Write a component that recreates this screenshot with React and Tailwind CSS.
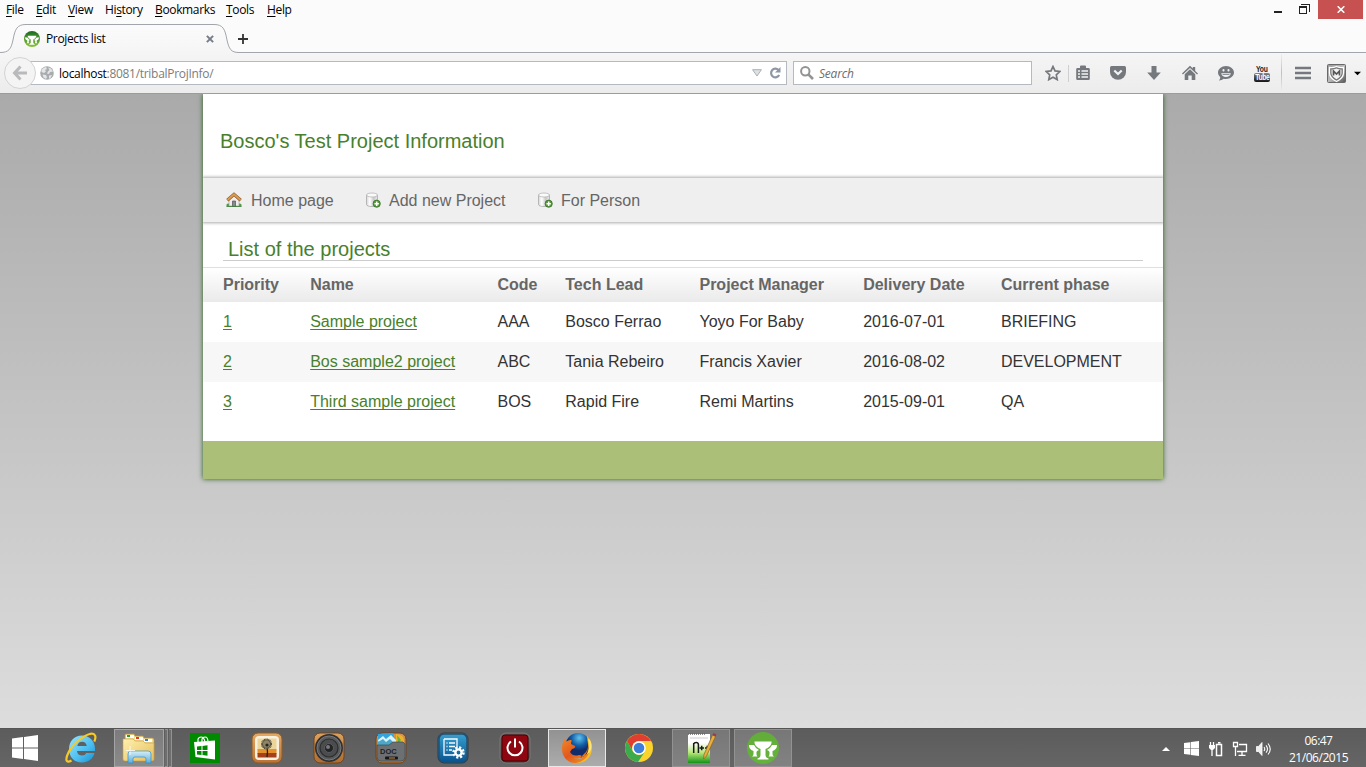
import React from "react";

const menus = [
  ["", "F", "ile", "w-[30px]", ""],
  ["", "E", "dit", "w-8", ""],
  ["", "V", "iew", "w-[37px]", ""],
  ["Hi", "s", "tory", "w-[50px]", ""],
  ["", "B", "ookmarks", "w-[71px]", ""],
  ["", "T", "ools", "w-[41px]", ""],
  ["", "H", "elp", "w-10", ""],
];

function Tree({ id, size, from, to, className }) {
  return (
    <svg className={className} width={size} height={size} viewBox="0 0 32 32">
      <defs>
        <linearGradient id={id} x1="0" y1="0" x2="0" y2="1">
          <stop offset="0" stopColor={from} />
          <stop offset="1" stopColor={to} />
        </linearGradient>
      </defs>
      <circle cx="16" cy="16" r="16" fill={`url(#${id})`} />
      <path fill="#fff" d="M7.500 9.500h17v1.500q-1 4-6 6v6q0 2.500 3 3.500v1h-11v-1q3-1 3-3.500v-6q-5-2-6-6zM2 13h5q1.500 3.500 5 5-2.500 1-2.500 2v2q0 1.500 1 2.500H5q1.500-1 1.500-2.500v-3Q2.500 17.500 2 14zM30 13h-5q-1.500 3.500-5 5 2.500 1 2.500 2v2q0 1.500-1 2.500H27q-1.500-1-1.500-2.500v-3q4-1.500 4.500-5z" />
    </svg>
  );
}

function TitleArea() {
  return (
    <header className="relative h-[53px] shrink-0 border-b border-[#a2a5ac] bg-[#fbfbfb]">
      <div className="flex h-[20px] justify-between">
        <nav className="flex pl-[6px] text-[12px] leading-[20px] tracking-[-0.35px] text-black">
          {menus.map(([a, u, b, w]) => (
            <span key={u + b} className={`${w} whitespace-nowrap`}>
              {a}
              <span className="underline underline-offset-2 decoration-1">{u}</span>
              {b}
            </span>
          ))}
        </nav>
        <div className="flex h-[19px]">
          <svg width="72" height="19" viewBox="0 0 72 19" fill="none" shapeRendering="crispEdges">
            <path d="M28 11h8v2h-8z" fill="#222" />
            <path d="M53.500 6.500h7v7h-7zM53.500 7.500h7M55 4.500h8.500v7.500" stroke="#222" />
          </svg>
          <div className="mr-[3px] flex w-[45px] items-center justify-center bg-[#c75050]">
            <svg width="8" height="7" viewBox="0 0 8 7">
              <path d="M.7.3l6.600 6.400M7.300.3L.7 6.700" stroke="#fff" strokeWidth="1.600" />
            </svg>
          </div>
        </div>
      </div>
      <div className="relative flex h-[33px] items-start">
        <svg className="absolute left-0 top-[4px]" width="240" height="30" viewBox="0 0 240 30">
          <defs>
            <linearGradient id="tab" x1="0" y1="0" x2="0" y2="1">
              <stop offset="0" stopColor="#fbfbfb" />
              <stop offset="1" stopColor="#f5f5f6" />
            </linearGradient>
          </defs>
          <path d="M0 28.500C9 28.500 11 25 13 16C15 5 17 .5 26 .5H214C223 .5 225 5 227 16C229 25 231 28.500 239 28.500V30H0z" fill="url(#tab)" />
          <path d="M0 28.500C9 28.500 11 25 13 16C15 5 17 .5 26 .5H214C223 .5 225 5 227 16C229 25 231 28.500 239 28.500" fill="none" stroke="#a2a5ac" />
        </svg>
        <div className="relative flex h-[38px] w-[229px] items-center pl-6 pr-[15px]">
          <Tree id="fav" size={16} from="#186a22" to="#8bc53a" />
          <span className="ml-[6px] grow text-[12px] tracking-[-0.35px] text-black">Projects list</span>
          <svg width="8" height="8" viewBox="0 0 9 9">
            <path d="M1 1l7 7M8 1l-7 7" stroke="#777e87" strokeWidth="2.300" />
          </svg>
        </div>
        <svg className="mt-[14px] ml-[9px]" width="10" height="10" viewBox="0 0 10 10">
          <path d="M5 0v10M0 5h10" stroke="#333" strokeWidth="1.800" />
        </svg>
      </div>
    </header>
  );
}

const icon = "block h-4 w-4";

function Toolbar() {
  return (
    <div className="flex h-[41px] shrink-0 items-center border-b border-[#999ca0] bg-linear-to-b from-[#f5f5f6] to-[#ececed]">
      <div className="relative z-10 ml-1 flex h-8 w-8 shrink-0 items-center justify-center rounded-full border border-[#d3d3d4] bg-[#f4f4f4]">
        <svg width="16" height="16" viewBox="0 0 16 16" fill="none" stroke="#b9babc" strokeWidth="3">
          <path d="M8.500 1.500L2.500 8l6 6.500M3 8h12" />
        </svg>
      </div>
      <div className="-ml-[6px] flex h-[24px] w-[757px] shrink-0 items-center border border-[#b5bac0] bg-white pl-[9px] pr-[5px]">
        <svg width="14" height="14" viewBox="0 0 14 14">
          <circle cx="7" cy="7" r="6.800" fill="#a9abae" />
          <path d="M1.500 4Q3 1.500 6 1L7 3 5 4l1 1.500L4 7 1.500 6zM8 1.500l3 1 2 3-3 .5-1 2-2-.5L8 5.500 9.500 4zM2.500 8.500L6 9l1 2-1 2-2.500-1.500zM9 9.500l3-.5-1.500 3-1.500 1z" fill="#e4e5e6" />
        </svg>
        <span className="ml-[5px] grow pt-[2px] text-[12px] tracking-[-0.3px] text-[#7c7c7c]">
          <span className="text-black">localhost</span>:8081/tribalProjInfo/
        </span>
        <svg className="mr-[7px]" width="10" height="8" viewBox="0 0 10 8">
          <path d="M.6.700h8.800L5 7z" fill="#dfe2e4" stroke="#a9afb4" />
        </svg>
        <svg width="12" height="12" viewBox="0 0 12 12">
          <path d="M9.500 3A4.300 4.300 0 1 0 10.200 8" fill="none" stroke="#8d97a4" strokeWidth="2.200" />
          <path d="M11.500 0v5.500H6z" fill="#8d97a4" />
        </svg>
      </div>
      <div className="ml-[6px] flex h-[24px] w-[239px] shrink-0 items-center border border-[#b5bac0] bg-white pl-[6px]">
        <svg width="14" height="14" viewBox="0 0 14 14" fill="none" stroke="#919395">
          <circle cx="5.300" cy="5.300" r="4.200" strokeWidth="2" />
          <path d="M8.300 8.300L13 13" strokeWidth="2.600" />
        </svg>
        <span className="ml-[5px] pt-[2px] text-[12px] tracking-[-0.2px] text-[#6d6d6d] italic">Search</span>
      </div>
      <div className="flex grow items-center pl-[13px] text-[#75797d]">
        <svg className={icon} viewBox="0 0 16 16" fill="none" stroke="currentColor" strokeWidth="1.700">
          <path d="M8 1.500l2 4.400 4.800.6-3.500 3.300.9 4.800L8 12.200l-4.200 2.400.9-4.800L1.200 6.500 6 5.900z" />
        </svg>
        <span className="ml-[7px] h-[17px] w-px bg-[#cfcfd1]" />
        <svg className={`${icon} ml-[6px]`} viewBox="0 0 16 16">
          <path fill="currentColor" d="M5 3V1.500Q5 .5 6 .5h4q1 0 1 1V3h2.500q1.300 0 1.300 1.300v9.400q0 1.300-1.300 1.300h-11Q1.200 15 1.200 13.700V4.300Q1.200 3 2.500 3z" />
          <path d="M3 6h2M3 9h2M3 12h2M6.500 6H13M6.500 9H13M6.500 12H13" stroke="#f3f3f4" strokeWidth="1.500" />
        </svg>
        <svg className={`${icon} ml-[19px]`} viewBox="0 0 16 16">
          <path fill="currentColor" d="M1.500 1h13Q16 1 16 2.500V7A8 7.800 0 0 1 0 7V2.500Q0 1 1.500 1z" />
          <path d="M4.300 5.500L8 9l3.700-3.500" fill="none" stroke="#f3f3f4" strokeWidth="2.200" />
        </svg>
        <svg className={`${icon} ml-5`} viewBox="0 0 16 16" fill="currentColor">
          <path d="M5.500 1h5v6.500h4.300L8 15 1.200 7.500h4.300z" />
        </svg>
        <svg className={`${icon} ml-5`} viewBox="0 0 16 16" fill="currentColor">
          <path d="M8 .8l2.800 2.700V2h2.400v3.900L16 8.500l-.9 1L8 2.900.9 9.500l-.9-1zM8 4.200l5.300 5V15H9.700v-4.500H6.300V15H2.700V9.200z" />
        </svg>
        <svg className={`${icon} ml-5`} viewBox="0 0 16 16">
          <path fill="currentColor" d="M8 1c4.500 0 8 3 8 6.500S12.500 14 8 14c-.8 0-1.500-.1-2.200-.3Q4 15.500.8 15.500q1.700-1.500 1.400-3.500C.8 10.900 0 9.300 0 7.500 0 4 3.500 1 8 1z" />
          <path d="M3.200 8.200h9.600Q12 12 8 12T3.200 8.200zM5.500 4a1 1.200 0 0 0 0 2.500 1 1.200 0 0 0 0-2.500zM10.500 4a1 1.200 0 0 0 0 2.500 1 1.200 0 0 0 0-2.500z" fill="#f3f3f4" />
          <path d="M4.500 9.500h7" stroke="currentColor" strokeWidth=".8" />
        </svg>
        <div className="ml-5 flex w-4 flex-col items-center font-['Liberation_Sans',sans-serif] text-[9px] leading-[8px] font-bold text-[#222]">
          <span className="scale-x-75 tracking-tight">You</span>
          <span className="flex h-[9px] w-4 items-center justify-center rounded-[2px] bg-linear-to-b from-[#888] to-[#161616] text-white">
            <span className="scale-x-75 tracking-[-0.5px]">Tube</span>
          </span>
        </div>
        <span className="ml-[11px] h-[38px] w-px bg-linear-to-b from-[#eee] via-[#bfc0c2] to-[#eee]" />
        <svg className={`${icon} ml-[13px]`} viewBox="0 0 16 16" stroke="currentColor" strokeWidth="2.600">
          <path d="M0 3h16M0 8h16M0 13h16" />
        </svg>
        <svg className="ml-4 shrink-0" width="19" height="19" viewBox="0 0 19 19">
          <defs>
            <linearGradient id="mc" x1="0" y1="0" x2="1" y2="1">
              <stop offset="0" stopColor="#999" />
              <stop offset=".5" stopColor="#bbb" />
              <stop offset="1" stopColor="#555" />
            </linearGradient>
          </defs>
          <rect x=".5" y=".5" width="18" height="18" rx="1" fill="url(#mc)" stroke="#696969" />
          <path d="M2.500 3.500Q6 4 9.500 2.500 13 4 16.500 3.500V9q0 5-7 8.500Q2.500 14 2.500 9z" fill="#777" stroke="#fff" strokeWidth="1.300" />
          <path d="M4.500 5.500q3 0 5-1 2 1 5 1V9q0 3.500-5 6.200Q4.500 12.500 4.500 9z" fill="#f2f2f2" />
          <path d="M6.500 11.500V7l3 3 3-3v4.500" fill="none" stroke="#555" strokeWidth="1.700" />
        </svg>
        <svg className="ml-2 shrink-0" width="7" height="5" viewBox="0 0 8 5">
          <path d="M0 .5h8L4 4.500z" fill="#000" />
        </svg>
      </div>
    </div>
  );
}

function HomeIcon() {
  return (
    <svg width="16" height="16" viewBox="0 0 16 16">
      <path d="M.5 12.500Q2 10.500 4 12.500h8q1.500-2 3.500 0v2H.5z" fill="#4f9a4b" />
      <path d="M3 7.500L8 3l5 4.500v6.500H3z" fill="#eee" stroke="#999" strokeWidth=".6" />
      <path d="M6.500 9h3v5.500h-3z" fill="#888" stroke="#555" strokeWidth=".7" />
      <path d="M1.300 8.200L8 2.300l6.700 5.900" fill="none" stroke="#8d5a26" strokeWidth="3.200" />
      <path d="M1.500 8L8 2.300 14.500 8" fill="none" stroke="#dc9b50" strokeWidth="2" />
      <path d="M.5 14.500h15" stroke="#3d7b39" strokeWidth=".8" />
    </svg>
  );
}

function DatabaseAdd({ id }) {
  return (
    <svg width="16" height="16" viewBox="0 0 16 16">
      <defs>
        <linearGradient id={id}>
          <stop offset="0" stopColor="#d5d5d5" />
          <stop offset=".3" stopColor="#fff" />
          <stop offset=".65" stopColor="#c8c8c8" />
          <stop offset="1" stopColor="#e8e8e8" />
        </linearGradient>
      </defs>
      <path d="M1.500 3v9.500c0 2.700 11 2.700 11 0V3z" fill={`url(#${id})`} stroke="#aaa" strokeWidth=".8" />
      <ellipse cx="7" cy="3" rx="5.500" ry="2" fill="#fafafa" stroke="#b5b5b5" strokeWidth=".8" />
      <circle cx="11.700" cy="11.700" r="3.600" fill="#5a9b40" stroke="#347023" strokeWidth=".8" />
      <path d="M11.700 9.500v4.400M9.500 11.700h4.400" stroke="#fff" strokeWidth="1.500" />
    </svg>
  );
}

const columns = ["Priority", "Name", "Code", "Tech Lead", "Project Manager", "Delivery Date", "Current phase"];
const projects = [
  ["1", "Sample project", "AAA", "Bosco Ferrao", "Yoyo For Baby", "2016-07-01", "BRIEFING"],
  ["2", "Bos sample2 project", "ABC", "Tania Rebeiro", "Francis Xavier", "2016-08-02", "DEVELOPMENT"],
  ["3", "Third sample project", "BOS", "Rapid Fire", "Remi Martins", "2015-09-01", "QA"],
];
const grid = "grid grid-cols-[87.200px_187.300px_67.800px_134.200px_163.700px_137.800px_1fr] pl-5";

function Page() {
  return (
    <main className="h-[634px] shrink-0 overflow-hidden bg-linear-to-b from-[#aaaaaa] to-[#dddddd] font-['Liberation_Sans',Arial,sans-serif] text-base text-[#333]">
      <div className="mx-auto flex h-[385px] w-[960px] flex-col bg-white shadow-[0_0_5px_#255b17]">
        <div className="flex h-[84px] shrink-0 items-center pt-[10px] pl-[17px] text-[20px] text-[#48802c]">
          Bosco&#39;s Test Project Information
        </div>
        <nav className="flex h-11 shrink-0 items-center bg-[#efefef] pl-[23px] text-[#666] shadow-[0_0_3px_1px_#aaaaaa] [clip-path:inset(-4px_0)]">
          <a className="flex w-[139px] items-center gap-[9px]"><HomeIcon /><span className="pt-[2px]">Home page</span></a>
          <a className="flex w-[172px] items-center gap-2"><DatabaseAdd id="db1" /><span className="pt-[2px]">Add new Project</span></a>
          <a className="flex items-center gap-2"><DatabaseAdd id="db2" /><span className="pt-[2px]">For Person</span></a>
        </nav>
        <h1 className="mx-5 mt-[14px] mb-[6px] h-[25px] shrink-0 border-b border-[#ccc] pl-[5px] text-[20px] leading-[27px] text-[#48802c]">
          List of the projects
        </h1>
        <div className={`${grid} h-[35px] shrink-0 items-center border-t border-[#dfdfdf] bg-linear-to-b from-white to-[#eaeaea] font-bold text-[#666]`}>
          {columns.map((c) => <span key={c}>{c}</span>)}
        </div>
        {projects.map((p, i) => (
          <div key={p[0]} className={`${grid} h-10 shrink-0 items-center ${i % 2 ? "bg-[#f7f7f7]" : "bg-white"}`}>
            {p.map((v, j) => (
              <span key={j} className={j < 2 ? "text-[#48802c] underline decoration-1 underline-offset-2 [text-decoration-skip-ink:none]" : ""}>{v}</span>
            ))}
          </div>
        ))}
        <footer className="mt-auto h-[38px] bg-[#abbf78]" />
      </div>
    </main>
  );
}

function WindowsLogo({ size }) {
  return (
    <svg width={size} height={size} viewBox="0 0 26 26" fill="#fff">
      <path d="M0 3.600L11 2v10.500H0zM12 1.900L26 0v12.500H12zM0 13.500h11V24L0 22.400zM12 13.500h14V26l-14-1.900z" />
    </svg>
  );
}

function IeIcon() {
  return (
    <svg width="32" height="32" viewBox="0 0 32 32">
      <defs>
        <linearGradient id="ie" x1="0" y1="0" x2="1" y2="1">
          <stop offset="0" stopColor="#9be5ff" />
          <stop offset=".6" stopColor="#48bdf0" />
          <stop offset="1" stopColor="#188fd0" />
        </linearGradient>
      </defs>
      <path fill="url(#ie)" fillRule="evenodd" d="M17 3.500c7.500 0 13 5.500 13 13.500v2H12c.3 3 2.200 4.500 5 4.500 2 0 3.500-.8 4.300-2.500H29.500c-1.500 6-6.500 9.500-12.500 9.500C9.300 30.500 4 25 4 17.200 4 9 9.500 3.500 17 3.500zM12.300 14h9.500c-.4-2.700-2.200-4.200-4.700-4.200-2.600 0-4.300 1.500-4.800 4.200z" />
      <path d="M6.500 28.500C2 31 .2 29 2.200 23.500 5.500 14 17 4 25.500 1.800c5-.8 6 3 3.800 7.800" fill="none" stroke="#f7c927" strokeWidth="2.200" />
    </svg>
  );
}

function FolderIcon() {
  return (
    <svg width="34" height="32" viewBox="0 0 34 32">
      <defs>
        <linearGradient id="fold" x1="0" y1="0" x2="1" y2="1">
          <stop offset="0" stopColor="#fff1ae" />
          <stop offset="1" stopColor="#e5be5c" />
        </linearGradient>
        <linearGradient id="glass" x1="0" y1="0" x2="0" y2="1">
          <stop offset="0" stopColor="#d4effa" />
          <stop offset="1" stopColor="#60add8" />
        </linearGradient>
      </defs>
      <path d="M3 3q0-1 1-1h8l1 2h8l1 2h8q2 0 2 2v20H3z" fill="#f1db91" stroke="#b99443" strokeWidth=".7" />
      <path d="M4 3h8v3H4zM13 5h8v3h-8zM22 7h8v3h-8z" fill="#fff" />
      <path d="M5 3h3v2H5z" fill="#1aa62c" />
      <path d="M14 5h3v2h-3z" fill="#e03b28" />
      <path d="M23 7h3v2h-3z" fill="#2885d0" />
      <path d="M1 7h10l2 2h8l2 2h9v16q0 2-2 2H3q-2 0-2-2z" fill="url(#fold)" stroke="#c59c47" strokeWidth=".6" />
      <path d="M6 31V22q0-3 3-3h17q3 0 3 3v9h-5v-4q0-2-2-2h-9q-2 0-2 2v4z" fill="url(#glass)" stroke="#398dbb" strokeWidth=".7" />
      <path d="M8 14v9M4 18.500h9" stroke="#fff" opacity=".8" />
    </svg>
  );
}

function StoreIcon() {
  return (
    <svg width="30" height="30" viewBox="0 0 30 30">
      <path d="M0 0h30v30H0z" fill="#008a00" />
      <path d="M8 9V6q1-2 3-2 3 0 4 5M12 9V6q1-2 3-2 3 0 3 5" fill="none" stroke="#fff" strokeWidth="1.200" />
      <path d="M4 9l21-1.500v19L5.500 24z" fill="#fff" />
      <path d="M7 13.500l4.500-.5v4H7zM12.500 12.900l5-.6V17h-5zM7 18h4.500v4L7 21.500zM12.500 18h5v4.700l-5-.6z" fill="#008a00" />
    </svg>
  );
}

function AppTile({ id, from, to, edge, children }) {
  return (
    <svg width="32" height="32" viewBox="0 0 32 32">
      <defs>
        <linearGradient id={id} x1="0" y1="0" x2="0" y2="1">
          <stop offset="0" stopColor={from} />
          <stop offset="1" stopColor={to} />
        </linearGradient>
      </defs>
      <rect x="1" y="1" width="30" height="30" rx="6" fill={`url(#${id})`} stroke={edge} />
      {children}
    </svg>
  );
}

function PhotoIcon() {
  return (
    <AppTile id="photo" from="#e5a964" to="#b97334" edge="#8a5a2c">
      <rect x="4" y="4" width="24" height="24" rx="4" fill="#f7f0df" />
      <path d="M6.500 6.500h19v13h-19z" fill="#ecd59a" />
      <path d="M6.500 17h19v5h-19z" fill="#e5922e" />
      <path d="M6.500 21h19v4.500h-19z" fill="#a3401b" />
      <path d="M16 15q1 5 0 10" stroke="#222" strokeWidth="1.300" fill="none" />
      <circle cx="15.500" cy="12" r="4.500" fill="#8d8468" stroke="#4b4737" strokeWidth="2" strokeDasharray=".9 .5" />
      <circle cx="16" cy="13" r="1.600" fill="#29251f" />
    </AppTile>
  );
}

function SpeakerTile() {
  return (
    <AppTile id="spk" from="#dda15e" to="#ae6c31" edge="#70451f">
      <circle cx="16" cy="16" r="14" fill="#303133" />
      <circle cx="16" cy="16" r="12" fill="#595a5c" stroke="#77787a" />
      <circle cx="16" cy="16" r="9" fill="#4b4c4e" stroke="#2c2d2e" strokeWidth="1.200" />
      <circle cx="16" cy="16" r="4.500" fill="#232426" stroke="#5a5b5d" />
      <circle cx="15" cy="15" r="2" fill="#77797c" />
    </AppTile>
  );
}

function DocTile() {
  return (
    <AppTile id="doc" from="#d09453" to="#bd7735" edge="#70451f">
      <path d="M3 2l15-1 4 15H3z" fill="#35a5dc" />
      <path d="M3 8l5-4 3 3 5-4 5 5v4H4z" fill="#d9f4ff" />
      <path d="M3 10l5-3 3 3 4-3 4 4v2H3z" fill="#4ca8c9" />
      <path d="M21 2q8 1 8 6v8h-8z" fill="#efb22b" />
      <path d="M22 3l4 5-3 4z" fill="#62b541" />
      <path d="M2 13h12l4-3h10l2 2v13q0 4-4 4H6q-4 0-4-4z" fill="#6c7073" stroke="#44484b" strokeWidth=".7" />
      <text x="5" y="22" fontFamily="Liberation Sans" fontWeight="bold" fontSize="7.500" fill="#202325">DOC</text>
      <rect x="10" y="24.500" width="13" height="3" rx="1" fill="#161616" />
      <path d="M14 26h6" stroke="#d88f45" />
    </AppTile>
  );
}

function SettingsTile() {
  return (
    <AppTile id="set" from="#39a2d1" to="#07518e" edge="#303a45">
      <rect x="2" y="2" width="28" height="28" rx="5" fill="none" stroke="#24506f" strokeWidth="1.500" />
      <path d="M7 7h13v9M7 7v16h9M9.500 11h1M12 11h6M9.500 14.500h1M12 14.500h6M9.500 18h1M12 18h3" fill="none" stroke="#f4fbff" strokeWidth="1.300" />
      <circle cx="21.500" cy="20.500" r="4.900" fill="none" stroke="#fff" strokeWidth="2.600" strokeDasharray="2.050 1.800" />
      <circle cx="21.500" cy="20.500" r="3.100" fill="none" stroke="#fff" strokeWidth="2.400" />
    </AppTile>
  );
}

function PowerTile() {
  return (
    <AppTile id="pow" from="#666061" to="#3e3839" edge="#7d7778">
      <rect x="3" y="3" width="26" height="26" rx="3" fill="#8e0710" stroke="#4b0003" />
      <path d="M12 9.500a7.500 7.500 0 1 0 8 0M16 6.500v9" fill="none" stroke="#fff" strokeWidth="2" />
    </AppTile>
  );
}

function FirefoxIcon() {
  return (
    <svg width="32" height="32" viewBox="0 0 32 32">
      <defs>
        <radialGradient id="ffb" cx=".55" cy=".2">
          <stop offset="0" stopColor="#64c3ec" />
          <stop offset=".6" stopColor="#1260a8" />
          <stop offset="1" stopColor="#122c69" />
        </radialGradient>
        <linearGradient id="ffo" x1="0" y1="0" x2=".8" y2="1">
          <stop offset="0" stopColor="#f08a26" />
          <stop offset=".55" stopColor="#e3571c" />
          <stop offset="1" stopColor="#ee8e1d" />
        </linearGradient>
      </defs>
      <circle cx="17" cy="13.500" r="12.500" fill="url(#ffb)" />
      <path d="M26 4q5 5 5 12c0 9-7 15-15 15l5-4q8-5 6-15z" fill="#f7bd27" />
      <path d="M27 11q1 7-4 11l-3 3q4 0 8-5-2 9-13 11C7 31.500 1 25 1 17Q1 10 4 6l1.500 3.500q2-2 5-1.500L10 12l4 2q1 2-3 3l-2 3q3 5 9 3 3 0 3 2-4 3-9 1 8 4 13-4 3-5 2-11z" fill="url(#ffo)" />
      <path d="M27 7q3 9-1 15l3-2q3-6 0-12z" fill="#fce57a" />
    </svg>
  );
}

function ChromeIcon() {
  return (
    <svg width="30" height="30" viewBox="0 0 30 30">
      <circle cx="15" cy="15" r="14" fill="#fbd32d" />
      <path d="M2.900 8A14 14 0 0 1 27.100 8H15a7 7 0 0 0-6 10.500z" fill="#df3e31" />
      <path d="M2.900 8A14 14 0 0 0 14 29l7-10.500a7 7 0 0 1-12 0z" fill="#3bab4b" />
      <circle cx="15" cy="15" r="6.800" fill="#fff" />
      <circle cx="15" cy="15" r="5.300" fill="#3d7edb" />
    </svg>
  );
}

function NotepadIcon() {
  return (
    <svg width="32" height="32" viewBox="0 0 32 32">
      <defs>
        <linearGradient id="npp" x1="0" y1="0" x2="0" y2="1">
          <stop offset=".3" stopColor="#fff" />
          <stop offset=".65" stopColor="#b3e676" />
          <stop offset="1" stopColor="#159317" />
        </linearGradient>
      </defs>
      <path d="M3 2h22v29H3z" fill="url(#npp)" />
      <path d="M3 2h17" stroke="#666" strokeWidth="1.500" strokeDasharray="1 1" />
      <path d="M5 6h18" stroke="#ccc" />
      <path d="M8.700 21V11v1q.5-1.500 2.500-1.500t2.200 2V21M14.500 16h4.500M16.700 13.800v4.500M20 16h4.500M22.200 13.800v4.500" fill="none" stroke="#1a1a1a" strokeWidth="1.500" />
      <path d="M27.500 3l3 1.500L21.500 24l-3 3 .5-4.500z" fill="#e8af3f" stroke="#8b6220" strokeWidth=".7" />
      <path d="M27.500 3l1-2 3 1.500-1 2z" fill="#923f4f" />
    </svg>
  );
}

const tasks = [
  [IeIcon, ""],
  [FolderIcon, "stack"],
  [StoreIcon, ""],
  [PhotoIcon, ""],
  [SpeakerTile, ""],
  [DocTile, ""],
  [SettingsTile, ""],
  [PowerTile, ""],
  [FirefoxIcon, "active"],
  [ChromeIcon, ""],
  [NotepadIcon, "open"],
  [() => <Tree id="tribal" size={32} from="#62ad39" to="#65b23d" />, "open"],
];
const taskStyles = {
  "": "border-transparent",
  open: "border-[#929292] bg-linear-to-b from-[#777] to-[#828282]",
  active: "border-[#e8e8e8] bg-linear-to-b from-[#929292] to-[#acacac]",
  stack: "border-transparent",
};

function Taskbar() {
  return (
    <footer className="flex h-[39px] shrink-0 border-t border-[#555] bg-linear-to-b from-[#5c5c5c] to-[#656565] text-white">
      <div className="flex w-[52px] shrink-0 items-center pl-3">
        <WindowsLogo size={26} />
      </div>
      <div className="flex gap-1">
        {tasks.map(([Icon, state], i) =>
          state === "stack" ? (
            <div key={i} className="flex w-[58px] gap-[1px]">
              <div className="flex w-[51px] items-center justify-center border border-[#a4a4a4] bg-linear-to-b from-[#7c7c7c] to-[#8a8a8a]"><Icon /></div>
              <div className="w-[3px] border-y border-r border-[#929292] bg-[#6e6e6e]" />
              <div className="w-[3px] border-y border-r border-[#929292] bg-[#6e6e6e]" />
            </div>
          ) : (
            <div key={i} className={`flex w-[58px] items-center justify-center border ${taskStyles[state]}`}><Icon /></div>
          )
        )}
      </div>
      <div className="ml-auto flex items-center pt-[1px]">
        <svg width="8" height="4" viewBox="0 0 8 4"><path d="M4 0l4 4H0z" fill="#fff" /></svg>
        <span className="ml-[14px]"><WindowsLogo size={15} /></span>
        <svg className="ml-[9px]" width="16" height="16" viewBox="0 0 16 16" fill="none" stroke="#fff">
          <path d="M8.500 3.500h5v11h-5zM10 1.800h2.500" strokeWidth="1.500" />
          <path d="M2.500 1v3M5.500 1v3M4 8v7" strokeWidth="1.300" />
          <path d="M1 4h6v3L5 9H3L1 7z" fill="#fff" stroke="none" />
        </svg>
        <svg className="ml-2" width="16" height="16" viewBox="0 0 16 16" fill="none" stroke="#fff" strokeWidth="1.300">
          <path d="M7 3.500h7.500v7H5M10 11v3M6.500 14.300h7M1.500 1.500h4v4h-4zM3.500 6v9" />
        </svg>
        <svg className="ml-[7px]" width="16" height="16" viewBox="0 0 16 16" fill="none" stroke="#fff">
          <path d="M1.500 5.500h2l3.500-4v13l-3.500-4h-2z" fill="#eee" strokeWidth=".8" />
          <path d="M9 6q1.500 2 0 4M11 4.300q3 3.700 0 7.400M13 2.500q4.500 5.500 0 11" strokeWidth="1.100" />
        </svg>
      </div>
      <div className="flex w-[95px] shrink-0 flex-col items-center pt-[3px] text-[12px] leading-[17px]">
        <span className="tracking-[-0.55px]">06:47</span>
        <span className="tracking-[-0.45px]">21/06/2015</span>
      </div>
    </footer>
  );
}

export default function App() {
  return (
    <div className="flex h-[767px] w-[1366px] flex-col overflow-hidden font-['Open_Sans','Noto_Sans',sans-serif]">
      <TitleArea />
      <Toolbar />
      <Page />
      <Taskbar />
    </div>
  );
}
